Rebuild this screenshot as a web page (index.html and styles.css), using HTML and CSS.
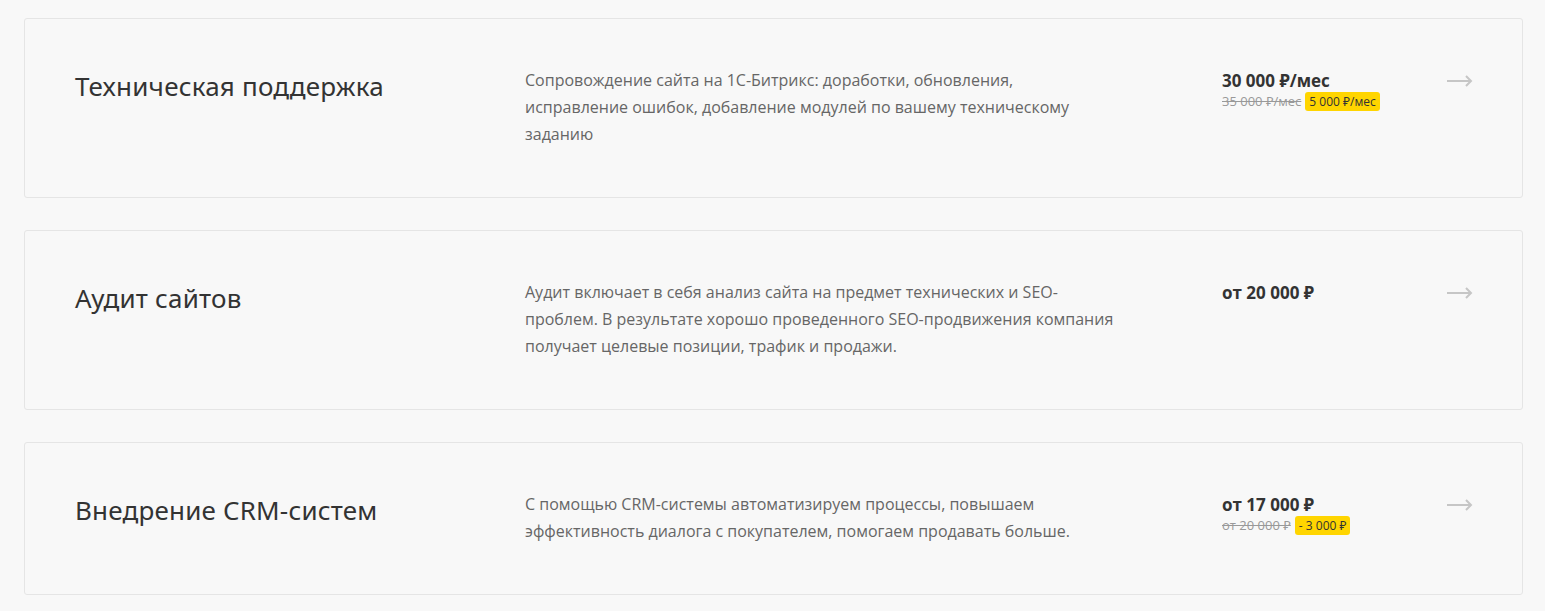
FILE: index.html
```html
<!DOCTYPE html>
<html lang="ru">
<head>
<meta charset="UTF-8">
<meta name="viewport" content="width=device-width, initial-scale=1">
<title>Услуги</title>
<link rel="stylesheet" href="styles.css">
</head>
<body>
<div class="services">

  <a class="service" href="#">
    <div class="service__title">Техническая поддержка</div>
    <div class="service__text">Сопровождение сайта на 1С-Битрикс: доработки, обновления,<br> исправление ошибок, добавление модулей по вашему техническому заданию</div>
    <div class="service__price">
      <div class="price">30 000 ₽/мес</div>
      <div class="price-old"><s>35 000 ₽/мес</s><span class="badge">5 000 ₽/мес</span></div>
    </div>
    <svg class="service__arrow" width="26" height="12" viewBox="0 0 26 12"><path d="M0 6h24.5M19 1l5 5-5 5" fill="none" stroke="currentColor" stroke-width="2"/></svg>
  </a>

  <a class="service" href="#">
    <div class="service__title">Аудит сайтов</div>
    <div class="service__text">Аудит включает в себя анализ сайта на предмет технических и SEO-<br>проблем. В результате хорошо проведенного SEO-продвижения компания получает целевые позиции, трафик и продажи.</div>
    <div class="service__price">
      <div class="price">от 20 000 ₽</div>
    </div>
    <svg class="service__arrow" width="26" height="12" viewBox="0 0 26 12"><path d="M0 6h24.5M19 1l5 5-5 5" fill="none" stroke="currentColor" stroke-width="2"/></svg>
  </a>

  <a class="service" href="#">
    <div class="service__title">Внедрение CRM-систем</div>
    <div class="service__text">С помощью CRM-системы автоматизируем процессы, повышаем эффективность диалога с покупателем, помогаем продавать больше.</div>
    <div class="service__price">
      <div class="price">от 17 000 ₽</div>
      <div class="price-old"><s>от 20 000 ₽</s><span class="badge">- 3 000 ₽</span></div>
    </div>
    <svg class="service__arrow" width="26" height="12" viewBox="0 0 26 12"><path d="M0 6h24.5M19 1l5 5-5 5" fill="none" stroke="currentColor" stroke-width="2"/></svg>
  </a>

</div>
</body>
</html>
```

FILE: styles.css
```css
/* список услуг */

:root {
  --bg: #f8f8f8;
  --line: #e5e5e5;
  --badge: #ffd500;
}

body {
  margin: 0;
  background: var(--bg);
  color: #333;
  font-family: "Open Sans", "Noto Sans", sans-serif;
}

.services {
  display: flex;
  flex-direction: column;
  gap: 32px;
  padding: 18px 22px 0 24px;
}

.service {
  display: grid;
  grid-template-columns: 450px 697px 1fr 25px;
  align-items: start;
  padding: 48px 50px 49px;
  border: 1px solid var(--line);
  border-radius: 3px;
  background: var(--bg);
  color: inherit;
  text-decoration: none;
}

.service__title {
  font-family: "Noto Sans", sans-serif;
  font-size: 26px;
  line-height: 38px;
  letter-spacing: 0.2px;
  color: #333;
}

.service__text {
  max-width: 612px;
  font-size: 16px;
  line-height: 27px;
  color: #666;
}

.price {
  font-weight: 700;
  font-size: 17px;
  line-height: 27px;
  color: #333;
}

.price-old {
  display: flex;
  align-items: center;
  gap: 4px;
  font-size: 13px;
  line-height: 19px;
  color: #999;
  margin-top: -2px;
}

.badge {
  padding: 0 4px;
  border-radius: 3px;
  background: var(--badge);
  font-size: 12px;
  color: #333;
}

.service__arrow {
  margin-top: 8px;
  color: #c6c6c6;
}
```
